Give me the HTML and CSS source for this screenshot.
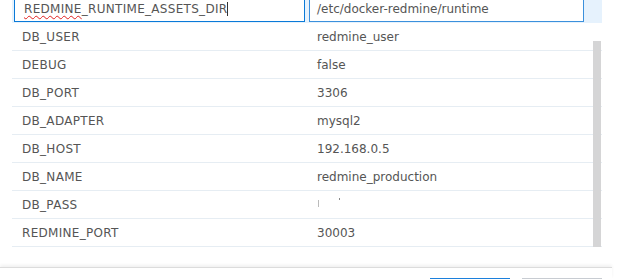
FILE: index.html
```html
<!DOCTYPE html>
<html lang="en">
<head>
    <meta charset="UTF-8">
    <title>Environment</title>
    <link rel="stylesheet" href="styles.css">
</head>
<body>
    <div class="grid">
        <div class="edit-row">
            <div class="field field-key">
                <span class="misspelled">REDMINE</span>_RUNTIME_ASSETS_DIR<span class="caret"></span>
            </div>
            <div class="field field-value">/etc/docker-redmine/runtime</div>
        </div>

        <div class="row"><div class="cell key">DB_USER</div><div class="cell">redmine_user</div></div>
        <div class="row"><div class="cell key">DEBUG</div><div class="cell">false</div></div>
        <div class="row"><div class="cell key">DB_PORT</div><div class="cell">3306</div></div>
        <div class="row"><div class="cell key">DB_ADAPTER</div><div class="cell">mysql2</div></div>
        <div class="row"><div class="cell key">DB_HOST</div><div class="cell">192.168.0.5</div></div>
        <div class="row"><div class="cell key">DB_NAME</div><div class="cell">redmine_production</div></div>
        <div class="row">
            <div class="cell key">DB_PASS</div>
            <div class="cell"><span class="masked"><i class="bar"></i><i class="dot"></i></span></div>
        </div>
        <div class="row"><div class="cell key">REDMINE_PORT</div><div class="cell">30003</div></div>

        <div class="scrollbar"></div>
    </div>

    <div class="footer">
        <button class="btn btn-primary"></button>
        <button class="btn"></button>
    </div>
</body>
</html>
```

FILE: styles.css
```css
body {
    margin: 0;
    width: 619px;
    height: 279px;
    overflow: hidden;
    font-family: "DejaVu Sans", Verdana, sans-serif;
    font-size: 12px;
    color: #555;
    background: #fff;
}
.grid {
    position: relative;
    margin-left: 12px;
    width: 590px;
    height: 267px;
}
.edit-row {
    display: flex;
    height: 23px;
    background: #e6f2fd;
    padding-left: 2px;
    box-sizing: border-box;
}
.field {
    box-sizing: border-box;
    height: 22px;
    background: #fff;
    border: 1px solid #0a7ad8;
    border-top: none;
    line-height: 18px;
    white-space: nowrap;
}
.field-key {
    width: 291px;
    padding-left: 9px;
    letter-spacing: 0.3px;
}
.field-value {
    width: 275px;
    margin-left: 4px;
    padding-left: 7px;
    border-color: #3b90dc;
}
.misspelled {
    text-decoration: underline wavy #e02020;
    text-decoration-thickness: 1px;
    text-underline-offset: 2px;
}
.caret {
    display: inline-block;
    width: 1px;
    height: 14px;
    background: #333;
    vertical-align: -3px;
}
.row {
    display: flex;
    height: 28px;
    border-bottom: 1px solid #e6edf3;
    box-sizing: border-box;
    align-items: center;
}
.cell {
    width: 295px;
    padding-left: 10px;
    box-sizing: border-box;
    white-space: nowrap;
}
.key {
    letter-spacing: 0.3px;
}
.masked {
    display: inline-block;
    position: relative;
    width: 30px;
    height: 14px;
}
.masked .bar {
    position: absolute;
    left: 1px;
    top: 4px;
    width: 1px;
    height: 7px;
    background: #bbb;
}
.masked .dot {
    position: absolute;
    left: 22px;
    top: 2px;
    width: 1px;
    height: 2px;
    background: #888;
}
.scrollbar {
    position: absolute;
    left: 581px;
    top: 41px;
    width: 8px;
    height: 206px;
    background: #d5d5d6;
}
.footer {
    display: flex;
    justify-content: flex-end;
    gap: 12px;
    width: 612px;
    height: 12px;
    padding: 10px 10px 0 0;
    box-sizing: border-box;
    border-top: 1px solid #dcdcdc;
    box-shadow: 0 -2px 3px rgba(0, 0, 0, 0.06);
    overflow: hidden;
}
.btn {
    width: 80px;
    height: 28px;
    border: none;
    border-top: 1px solid #c8ccd2;
    background: #f2f4f6;
    padding: 0;
}
.btn-primary {
    border-top: 1px solid #1c80dc;
    background: #1e88e5;
}
```
